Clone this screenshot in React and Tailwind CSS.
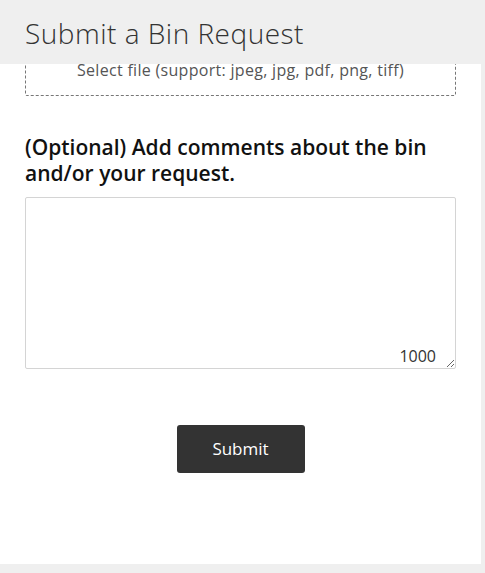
import React from "react";

const FONT = { fontFamily: "'Open Sans', Lato, 'Liberation Sans', sans-serif" };

const BinRequest = () => {
  return (
    <div className="w-[485px] h-[573px] bg-[#efefef] flex flex-col overflow-hidden" style={FONT}>
      {/* HEADER */}
      <div className="h-[64px] shrink-0 px-[25px] flex items-center bg-[#efefef]">
        <h1 className="text-[28px] leading-none font-light tracking-[0.5px] text-[#333333] pt-[2px]">
          Submit a Bin Request
        </h1>
      </div>

      <div className="flex flex-1 min-h-0">
        {/* FORM BODY */}
        <div className="w-[481px] h-[500px] bg-white overflow-hidden px-[25px]">
          <div className="-mt-[20px] h-[52px] border border-dashed border-[#777777] rounded-[2px] flex items-center justify-center">
            <span className="text-[16px] tracking-[0.3px] text-[#555555]">Select file (support: jpeg, jpg, pdf, png, tiff)</span>
          </div>

          <h2 className="mt-[38px] text-[21px] leading-[26px] font-semibold text-[#111111]">
            (Optional) Add comments about the bin and/or your request.
          </h2>

          <div className="relative mt-[11px]">
            <textarea
              className="block w-full h-[172px] border border-[#d4d4d4] rounded-[2px] p-2 text-[15px] text-[#333333] outline-none resize"
              maxLength={1000}
            />
            <span className="absolute right-[20px] bottom-[1px] text-[16px] text-[#333333]">1000</span>
          </div>

          <div className="flex justify-center mt-[56px]">
            <button className="w-[128px] h-[48px] bg-[#333333] text-white text-[17px] rounded-[3px]">
              Submit
            </button>
          </div>
        </div>
      </div>

      <div className="h-[9px] shrink-0" />
    </div>
  );
};

export default function App() {
  return <BinRequest />;
}
